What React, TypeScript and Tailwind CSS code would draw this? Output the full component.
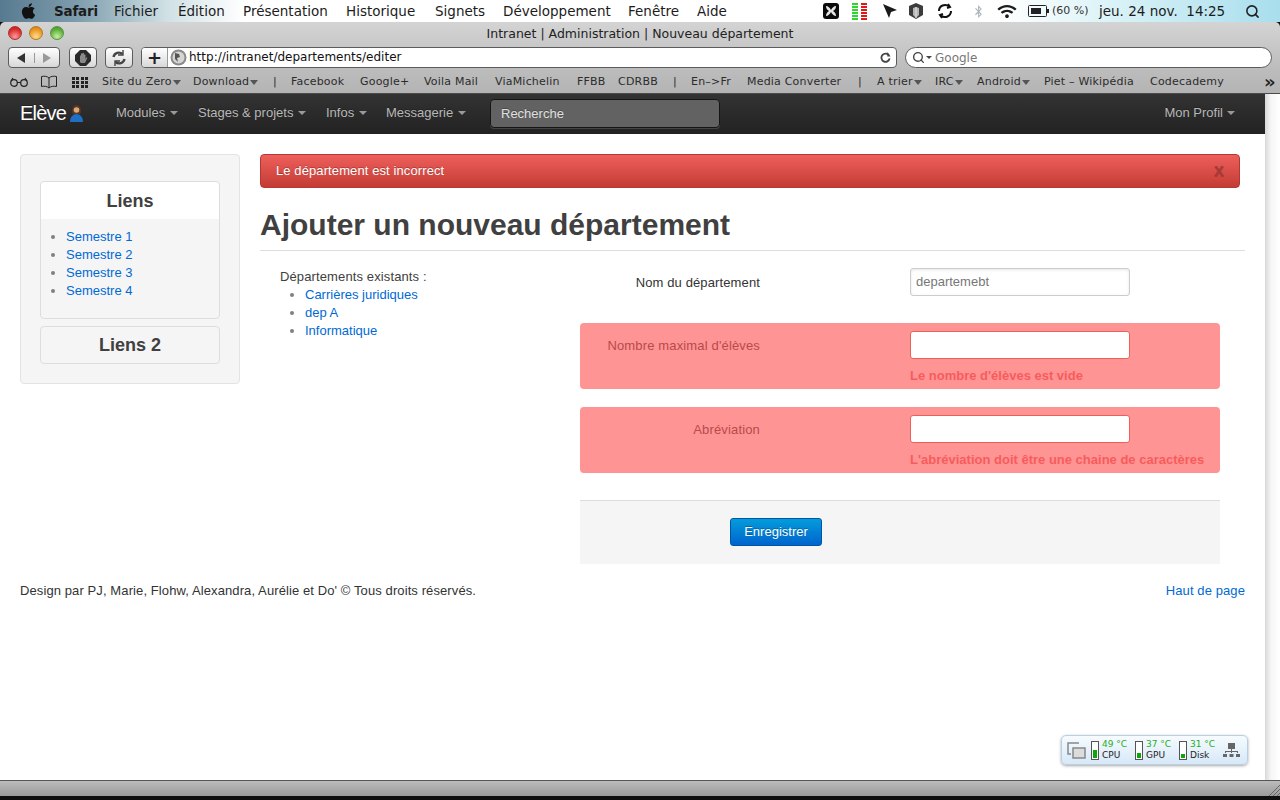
import { FaApple, FaBluetoothB, FaWifi } from 'react-icons/fa';
import { Search } from 'lucide-react';

const lucida = 'font-["DejaVu_Sans",sans-serif]';

const menus = [
  { label: 'Fichier', w: 'w-[64px]' },
  { label: 'Édition', w: 'w-[65px]' },
  { label: 'Présentation', w: 'w-[103px]' },
  { label: 'Historique', w: 'w-[89px]' },
  { label: 'Signets', w: 'w-[68px]' },
  { label: 'Développement', w: 'w-[125px]' },
  { label: 'Fenêtre', w: 'w-[69px]' },
  { label: 'Aide', w: 'w-[40px]' },
];

const bookmarks = [
  { label: 'Site du Zero', w: 'w-[91px]', caret: true },
  { label: 'Download', w: 'w-[80px]', caret: true },
  { label: '|', w: 'w-[18px]' },
  { label: 'Facebook', w: 'w-[69px]' },
  { label: 'Google+', w: 'w-[64px]' },
  { label: 'Voila Mail', w: 'w-[71px]' },
  { label: 'ViaMichelin', w: 'w-[82px]' },
  { label: 'FFBB', w: 'w-[41px]' },
  { label: 'CDRBB', w: 'w-[55px]' },
  { label: '|', w: 'w-[18px]' },
  { label: 'En–>Fr', w: 'w-[56px]' },
  { label: 'Media Converter', w: 'w-[111px]' },
  { label: '|', w: 'w-[19px]' },
  { label: 'A trier', w: 'w-[58px]', caret: true },
  { label: 'IRC', w: 'w-[42px]', caret: true },
  { label: 'Android', w: 'w-[67px]', caret: true },
  { label: 'Piet – Wikipédia', w: 'w-[106px]' },
  { label: 'Codecademy', w: 'w-[114px]' },
];

const navItems = [
  { label: 'Modules', w: 'w-[82px]' },
  { label: 'Stages & projets', w: 'w-[128px]' },
  { label: 'Infos', w: 'w-[60px]' },
  { label: 'Messagerie', w: 'w-[104px]' },
];

const temps = [
  { value: '49 °C', name: 'CPU', bar: 'h-[8px]' },
  { value: '37 °C', name: 'GPU', bar: 'h-[5px]' },
  { value: '31 °C', name: 'Disk', bar: 'h-[4px]' },
];

const stripes = [0, 1, 2, 3, 4, 5];

function Caret({ className }: { className: string }) {
  return <span className={`inline-block h-0 w-0 border-x-[4px] border-t-[4px] border-x-transparent ${className}`} />;
}

function MenuBar() {
  return (
    <div className={`flex h-[22px] shrink-0 items-center bg-[linear-gradient(90deg,#587a90_0%,#7d9cac_6%,#cfe0e4_13%,#ffffff_19%,#ffffff_78%,#d6f1f6_88%,#a8deed_100%)] text-[13.5px] text-[#1c1c1c] ${lucida}`}>
      <FaApple className="ml-[20px] h-[18px] w-[17px] text-[#111]" />
      <span className="ml-[17px] w-[60px] font-bold tracking-[-0.2px]">Safari</span>
      {menus.map((m) => (
        <span key={m.label} className={`whitespace-nowrap ${m.w}`}>{m.label}</span>
      ))}
      <div className="ml-[86px] flex w-[21px] items-center">
        <svg width="16" height="16" viewBox="0 0 16 16">
          <rect width="16" height="16" rx="3" fill="#0c0c0c" />
          <path d="M3 3c2 0 4 2 5 4 1-2 3-4 5-4 0 2-1 4-3 5 2 1 3 3 3 5-2 0-4-2-5-4-1 2-3 4-5 4 0-2 1-4 3-5-2-1-3-3-3-5z" fill="#e8e8e8" />
        </svg>
      </div>
      <div className="ml-[8px] flex gap-[3px]">
        <div className="flex w-[6px] flex-col gap-[1px]">
          {stripes.map((s) => (
            <i key={s} className="h-[2px] bg-[#2fd62f]" />
          ))}
        </div>
        <div className="flex w-[6px] flex-col gap-[1px]">
          {stripes.map((s) => (
            <i key={s} className="h-[2px] bg-[#e01818]" />
          ))}
        </div>
      </div>
      <svg className="ml-[15px]" width="16" height="16" viewBox="0 0 16 16">
        <path d="M1 1l14 6-6 2-2 6z" fill="#1a1a1a" />
      </svg>
      <svg className="ml-[9px]" width="18" height="18" viewBox="0 0 18 18">
        <path d="M9 1l7 3v9l-7 4-7-4V4z" fill="#3c3c3c" />
        <path d="M6 6l3-1 3 1v7l-3 3-3-3z" fill="#b5b5b5" />
        <path d="M9 5v11" stroke="#e4e4e4" strokeWidth="1" />
      </svg>
      <svg className="ml-[11px]" width="18" height="16" viewBox="0 0 18 16" fill="none" stroke="#111" strokeWidth="2">
        <path d="M3 8a6 6 0 0 1 10-4.500M15 8a6 6 0 0 1-10 4.500" />
        <path d="M12 1l2 3-3 1M6 15l-2-3 3-1" />
      </svg>
      <FaBluetoothB className="ml-[20px] h-[13px] w-[9px] text-[#aab5b8]" />
      <FaWifi className="ml-[14px] h-[15px] w-[20px] text-[#1c1c1c]" />
      <svg className="ml-[11px]" width="22" height="12" viewBox="0 0 22 12" fill="none">
        <rect x="0.500" y="0.500" width="18" height="11" rx="1" stroke="#222" />
        <rect x="3" y="3" width="10" height="6" fill="#222" />
        <rect x="19" y="4" width="2" height="4" fill="#222" />
      </svg>
      <span className="ml-[2px] w-[44px] whitespace-nowrap text-[11px] text-[#333]">(60 %)</span>
      <span className="ml-[3px] w-[129px] whitespace-nowrap">jeu. 24 nov.&nbsp;&nbsp;14:25</span>
      <Search className="ml-[17px] h-[15px] w-[15px] text-[#222]" strokeWidth={2.5} />
    </div>
  );
}

function TitleBar() {
  return (
    <div className={`relative flex h-[22px] shrink-0 items-center justify-center pt-[2px] text-[#222] ${lucida}`}>
      <div className="absolute left-[8px] top-[4px] flex gap-[7px]">
        <span className="h-[14px] w-[14px] rounded-full border border-[#a33] bg-[radial-gradient(circle_at_50%_80%,#ff9a9a,#d92b2b_65%,#b81a1a)]" />
        <span className="h-[14px] w-[14px] rounded-full border border-[#b77b22] bg-[radial-gradient(circle_at_50%_80%,#ffdc8c,#e8961f_65%,#c97810)]" />
        <span className="h-[14px] w-[14px] rounded-full border border-[#5b9440] bg-[radial-gradient(circle_at_50%_80%,#c4f0a0,#5cad3a_65%,#3f8f24)]" />
      </div>
      <span className="text-[12.5px]">Intranet | Administration | Nouveau département</span>
    </div>
  );
}

const chromeBtn = 'flex h-[21px] items-center justify-center border border-[#5c5c5c] bg-[linear-gradient(#ffffff,#d8d8d8)]';

function Toolbar() {
  return (
    <div className={`flex h-[26px] shrink-0 items-start pl-[8px] pt-[3px] ${lucida}`}>
      <div className={`${chromeBtn} w-[52px] rounded-[4px]`}>
        <span className="flex flex-1 justify-center border-r border-[#999]">
          <span className="h-0 w-0 border-y-[5px] border-r-[8px] border-y-transparent border-r-[#333]" />
        </span>
        <span className="flex flex-1 justify-center">
          <span className="h-0 w-0 border-y-[5px] border-l-[8px] border-y-transparent border-l-[#999]" />
        </span>
      </div>
      <div className={`${chromeBtn} ml-[9px] w-[28px] rounded-[4px]`}>
        <svg width="16" height="16" viewBox="0 0 16 16">
          <path d="M5 0h6l5 5v6l-5 5H5l-5-5V5z" fill="#2a2a2a" />
          <path d="M5 12V6c0-1 1-1 1 0V4c0-1 1.500-1 1.500 0v-.5c0-1 1.500-1 1.500 0V5c0-1 1.500-1 1.500 0v4l1-1.500c.5-.5 1 0 .8.5L10 13H6z" fill="#8a8a8a" />
        </svg>
      </div>
      <div className={`${chromeBtn} ml-[8px] w-[28px] rounded-[4px]`}>
        <svg width="16" height="16" viewBox="0 0 16 16" fill="none" stroke="#444" strokeWidth="2.400">
          <path d="M2.500 7a5.500 5.500 0 0 1 9-3M13.500 9a5.500 5.500 0 0 1-9 3" />
          <path d="M12 0v5H7M4 16v-5h5" strokeWidth="1.400" />
        </svg>
      </div>
      <div className="ml-[8px] flex h-[21px] w-[756px] overflow-hidden rounded-[4px] border border-[#5c5c5c] bg-white">
        <span className="flex w-[26px] items-center justify-center border-r border-[#999] bg-[linear-gradient(#ffffff,#d8d8d8)] text-[18px] font-bold leading-none text-[#222]">+</span>
        <svg className="ml-[2px] mt-[1px] shrink-0" width="17" height="17" viewBox="0 0 17 17">
          <circle cx="8.500" cy="8.500" r="8" fill="#8a8a8a" />
          <circle cx="8.500" cy="8.500" r="6" fill="#d5d5d5" />
          <path d="M5 4l4 1 1 3-3 1 1 4-3-3z" fill="#555" />
        </svg>
        <span className="ml-[2px] flex-1 text-[12px] leading-[19px] text-[#111]">http://intranet/departements/editer</span>
        <svg className="mr-[5px] mt-[4px]" width="11" height="11" viewBox="0 0 12 12" fill="none" stroke="#444" strokeWidth="2">
          <path d="M10 4a4.500 4.500 0 1 0 .5 3" />
          <path d="M8 0v5h3.500z" fill="#444" stroke="none" />
        </svg>
      </div>
      <div className="ml-[8px] flex h-[21px] w-[367px] items-center rounded-full border border-[#5c5c5c] bg-white pl-[6px]">
        <Search className="h-[13px] w-[13px] text-[#444]" strokeWidth={2.5} />
        <span className="ml-[1px] h-0 w-0 border-x-[3px] border-t-[3px] border-x-transparent border-t-[#444]" />
        <span className="ml-[3px] text-[12px] text-[#777]">Google</span>
      </div>
    </div>
  );
}

function BookmarksBar() {
  return (
    <div className={`flex h-[24px] shrink-0 items-center border-b border-[#4a4a4a] pl-[10px] pt-[1px] text-[11px] text-[#2c2c2c] ${lucida}`}>
      <svg width="18" height="10" viewBox="0 0 18 10" fill="none" stroke="#222" strokeWidth="1.200">
        <circle cx="4" cy="6" r="3.300" />
        <circle cx="14" cy="6" r="3.300" />
        <path d="M7 5.500h4M1 4l2-3M17 4l-2-3" />
      </svg>
      <svg className="ml-[12px]" width="18" height="14" viewBox="0 0 18 14" fill="none" stroke="#222">
        <path d="M9 3C7 1 4 1 1.500 1.500v10C4 11 7 11 9 13c2-2 5-2 7.500-1.500v-10C14 1 11 1 9 3zM9 3v10" />
      </svg>
      <div className="ml-[14px] grid w-[16px] shrink-0 grid-cols-4 gap-[1px]">
        {Array.from({ length: 12 }).map((_, i) => (
          <i key={i} className="h-[3px] w-[3px] bg-[#222]" />
        ))}
      </div>
      <div className="ml-[14px] flex items-center">
        {bookmarks.map((b, i) => (
          <div key={i} className={`flex shrink-0 items-center whitespace-nowrap ${b.w}`}>
            <span className="tracking-[0.2px]">{b.label}</span>
            {b.caret && <Caret className="ml-[1px] border-x-[3px] border-t-[5px] border-t-[#555]" />}
          </div>
        ))}
      </div>
      <span className="text-[18px] font-bold leading-none text-[#222]">»</span>
    </div>
  );
}

function Navbar() {
  return (
    <div className="flex h-[40px] shrink-0 items-center bg-[linear-gradient(#333333,#222222)] pb-[2px] pl-[20px] pr-[30px] text-[13px] text-[#b8b8b8] [text-shadow:0_-1px_0_rgba(0,0,0,0.25)]">
      <span className="w-[46px] text-[20px] tracking-[-0.8px] text-white">Elève</span>
      <svg className="ml-[3px]" width="15" height="19" viewBox="0 0 15 19">
        <path d="M3 8c0-5 2-7 4.500-7S12 3 12 8l-1 2H4z" fill="#5a3520" />
        <circle cx="7.500" cy="6" r="2.800" fill="#d9a878" />
        <path d="M1 18c0-5 3-8 6.500-8S14 13 14 18z" fill="#1f6fc4" />
      </svg>
      <div className="ml-[32px] flex items-center">
        {navItems.map((n) => (
          <div key={n.label} className={`flex items-center gap-[5px] whitespace-nowrap ${n.w}`}>
            <span>{n.label}</span>
            <Caret className="border-t-[#999]" />
          </div>
        ))}
      </div>
      <div className="w-[230px] rounded-[4px] border border-[#151515] bg-[#626262] px-[10px] py-[5px] leading-[17px] text-[#e0e0e0] shadow-[0_1px_0_rgba(255,255,255,0.15)]">
        Recherche
      </div>
      <div className="ml-auto flex items-center gap-[4px]">
        <span>Mon Profil</span>
        <Caret className="border-t-[#999]" />
      </div>
    </div>
  );
}

function Sidebar() {
  return (
    <aside className="h-[230px] w-[220px] shrink-0 rounded-[4px] border border-[#e3e3e3] bg-[#f5f5f5] px-[19px] pt-[26px]">
      <div className="h-[138px] rounded-[4px] border border-[#dddddd]">
        <h4 className="flex h-[37px] items-center justify-center rounded-t-[4px] bg-white pt-[1px] text-[18px] font-bold text-[#404040]">Liens</h4>
        <ul className="list-disc pl-[25px] pt-[9px] text-[13px] leading-[18px] text-[#808080]">
          <li><a className="text-[#0069d6]">Semestre 1</a></li>
          <li><a className="text-[#0069d6]">Semestre 2</a></li>
          <li><a className="text-[#0069d6]">Semestre 3</a></li>
          <li><a className="text-[#0069d6]">Semestre 4</a></li>
        </ul>
      </div>
      <h4 className="mt-[7px] flex h-[38px] items-center justify-center rounded-[4px] border border-[#dddddd] pt-[1px] text-[18px] font-bold text-[#404040]">Liens 2</h4>
    </aside>
  );
}

function ErrorRow({ label, message }: { label: string; message: string }) {
  return (
    <div className="flex h-[66px] rounded-[4px] bg-[#ff9494] pt-[8px]">
      <label className="w-[180px] pt-[6px] text-right text-[13px] leading-[18px] tracking-[0.15px] text-[#b94a4a]">{label}</label>
      <div className="ml-[150px]">
        <div className="h-[28px] w-[220px] rounded-[3px] border border-[#ee5f5b] bg-white" />
        <p className="mt-[8px] whitespace-nowrap text-[13px] font-bold leading-[18px] text-[#f75c5c]">{message}</p>
      </div>
    </div>
  );
}

function MainForm() {
  return (
    <main className="w-[985px] shrink-0">
      <div className="flex h-[34px] w-[980px] items-center justify-between rounded-[4px] border border-[#b23a36] bg-[linear-gradient(#ee5f5b,#c43c35)] pl-[15px] pr-[15px] text-[13px] tracking-[0.1px] text-white [text-shadow:0_-1px_0_rgba(0,0,0,0.25)]">
        <span>Le département est incorrect</span>
        <span className="text-[18px] font-bold leading-none text-[#a93a38]">x</span>
      </div>
      <h1 className="mt-[19px] border-b border-[#dddddd] pb-[7px] text-[30px] font-bold leading-[36px] text-[#404040]">Ajouter un nouveau département</h1>
      <div className="flex pt-[17px]">
        <div className="ml-[20px] w-[300px] shrink-0 text-[13px] leading-[18px] text-[#404040]">
          <p className="tracking-[0.12px]">Départements existants :</p>
          <ul className="list-disc pl-[25px] text-[#808080]">
            <li><a className="text-[#0069d6]">Carrières juridiques</a></li>
            <li><a className="text-[#0069d6]">dep A</a></li>
            <li><a className="text-[#0069d6]">Informatique</a></li>
          </ul>
        </div>
        <form className="w-[640px] shrink-0">
          <div className="flex h-[28px] items-center">
            <label className="w-[180px] pt-[1px] text-right text-[13px] tracking-[0.12px] text-[#333]">Nom du département</label>
            <div className="ml-[150px] flex h-[28px] w-[220px] items-center rounded-[3px] border border-[#cccccc] bg-white px-[5px] text-[13px] text-[#777] shadow-[inset_0_1px_3px_rgba(0,0,0,0.1)]">departemebt</div>
          </div>
          <div className="mt-[27px]">
            <ErrorRow label="Nombre maximal d'élèves" message="Le nombre d'élèves est vide" />
          </div>
          <div className="mt-[18px]">
            <ErrorRow label="Abréviation" message="L'abréviation doit être une chaine de caractères" />
          </div>
          <div className="mt-[27px] h-[64px] border-t border-[#dddddd] bg-[#f5f5f5] pl-[150px] pt-[17px]">
            <button type="button" className="h-[28px] w-[92px] rounded-[3px] border border-[#0055a8] bg-[linear-gradient(#049cdb,#0064cd)] text-[13px] text-white [text-shadow:0_-1px_0_rgba(0,0,0,0.25)]">Enregistrer</button>
          </div>
        </form>
      </div>
    </main>
  );
}

function TempWidget() {
  return (
    <div className={`absolute bottom-[15px] right-[32px] flex h-[30px] w-[187px] items-center rounded-[5px] border border-[#b9cfe2] bg-[linear-gradient(#f6fbff,#d7e8f7)] pl-[5px] shadow-[0_1px_3px_rgba(0,0,0,0.35)] ${lucida}`}>
      <svg width="19" height="17" viewBox="0 0 19 17" fill="none" stroke="#888" strokeWidth="1.500">
        <path d="M12 1H1v11h3" />
        <rect x="6" y="6" width="12" height="10" fill="#dcdcdc" />
      </svg>
      <div className="ml-[5px] flex gap-[8px]">
        {temps.map((t) => (
          <div key={t.name} className="flex w-[36px] items-center gap-[3px]">
            <div className="flex h-[19px] w-[8px] shrink-0 flex-col justify-end border border-[#555] bg-white px-[1px] pb-[1px]">
              <i className={`block bg-[#0aa60a] ${t.bar}`} />
            </div>
            <div className="text-[9px] leading-[11px]">
              <div className="whitespace-nowrap text-[#1fae1f]">{t.value}</div>
              <div className="text-[#222]">{t.name}</div>
            </div>
          </div>
        ))}
      </div>
      <svg className="ml-[8px]" width="17" height="15" viewBox="0 0 17 15" fill="#666">
        <rect x="5" y="0" width="7" height="6" />
        <path d="M8 6h1v2h6v2h-1V9H9v1H8V9H3v1H2V8h6z" />
        <rect x="0" y="11" width="4" height="3" />
        <rect x="6.500" y="11" width="4" height="3" />
        <rect x="13" y="11" width="4" height="3" />
      </svg>
    </div>
  );
}

export default function App() {
  return (
    <div className='flex h-[800px] w-[1280px] flex-col overflow-hidden bg-[#0f0f0f] font-["Liberation_Sans",Arial,sans-serif]'>
      <MenuBar />
      <div className="flex min-h-0 flex-1 flex-col rounded-t-[5px] bg-[linear-gradient(#d4d4d4_0px,#bcbcbc_48px,#b4b4b4_71px)]">
        <TitleBar />
        <Toolbar />
        <BookmarksBar />
        <div className="relative flex min-h-0 flex-1 bg-white">
          <div className="flex min-w-0 flex-1 flex-col">
            <Navbar />
            <div className="flex-1 px-[20px] pt-[20px]">
              <div className="flex gap-[20px]">
                <Sidebar />
                <MainForm />
              </div>
              <footer className="mt-[18px] flex w-[1225px] justify-between text-[13px] leading-[18px] tracking-[0.1px] text-[#333]">
                <span>Design par PJ, Marie, Flohw, Alexandra, Aurélie et Do' © Tous droits réservés.</span>
                <a className="text-[#0069d6]">Haut de page</a>
              </footer>
            </div>
          </div>
          <div className="w-[15px] shrink-0 bg-[linear-gradient(90deg,#d8d8d8,#f6f6f6_40%,#ffffff)]" />
          <TempWidget />
        </div>
        <div className="relative h-[16px] shrink-0 border-t border-[#555] bg-[linear-gradient(#bcbcbc,#9a9a9a)]">
          <svg className="absolute bottom-0 right-0" width="12" height="12" viewBox="0 0 12 12" stroke="#666">
            <path d="M12 1L1 12M12 5L5 12M12 9L9 12" />
          </svg>
        </div>
      </div>
      <div className="h-[4px] shrink-0 bg-[#0f0f0f]" />
    </div>
  );
}
